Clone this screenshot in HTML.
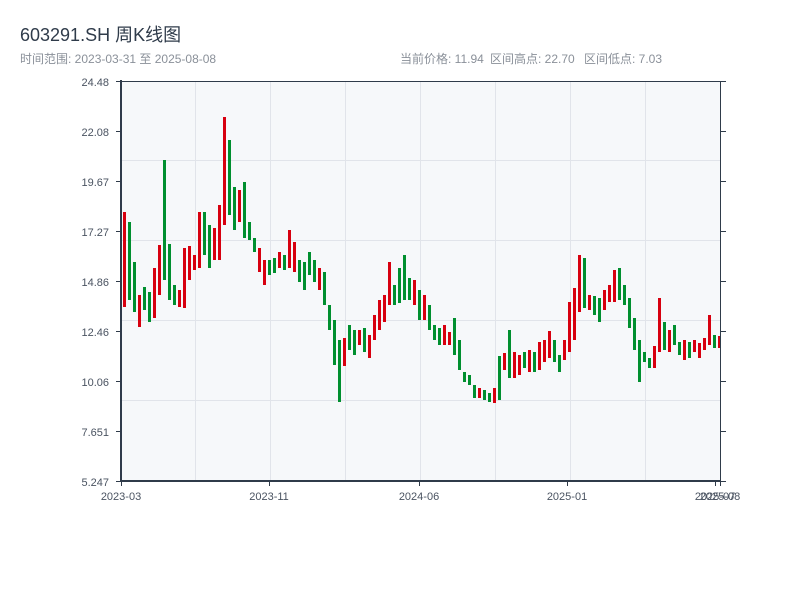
<!DOCTYPE html>
<html><head><meta charset="utf-8"><style>
body{margin:0;width:800px;height:600px;background:#fff;font-family:"Liberation Sans","Noto Sans CJK SC",sans-serif;overflow:hidden}
svg text{font-family:"Liberation Sans","Noto Sans CJK SC",sans-serif;white-space:pre}
</style></head><body>
<svg width="800" height="600" xmlns="http://www.w3.org/2000/svg">
<text x="20" y="41" font-size="18" fill="#2f3b4a">603291.SH 周K线图</text>
<text x="20" y="63" font-size="12" fill="#8a9099">时间范围: 2023-03-31 至 2025-08-08</text>
<text x="400" y="63" font-size="12" fill="#8a9099">当前价格: 11.94</text>
<text x="490" y="63" font-size="12" fill="#8a9099">区间高点: 22.70</text>
<text x="584" y="63" font-size="12" fill="#8a9099">区间低点: 7.03</text>
<rect x="121" y="81" width="599" height="400" fill="#f6f8fa"/>
<g stroke="#e1e4ea" stroke-width="1">
<line x1="195.5" y1="81" x2="195.5" y2="481"/><line x1="270.5" y1="81" x2="270.5" y2="481"/><line x1="345.5" y1="81" x2="345.5" y2="481"/><line x1="420.5" y1="81" x2="420.5" y2="481"/><line x1="495.5" y1="81" x2="495.5" y2="481"/><line x1="570.5" y1="81" x2="570.5" y2="481"/><line x1="645.5" y1="81" x2="645.5" y2="481"/>
<line x1="121" y1="160.5" x2="720" y2="160.5"/><line x1="121" y1="240.5" x2="720" y2="240.5"/><line x1="121" y1="320.5" x2="720" y2="320.5"/><line x1="121" y1="400.5" x2="720" y2="400.5"/>
</g>
<g fill="#d7000f">
<rect x="120" y="330" width="2" height="112"/>
<rect x="123" y="212" width="3" height="95"/><rect x="138" y="295" width="3" height="32"/><rect x="153" y="268" width="3" height="50"/><rect x="158" y="245" width="3" height="50"/><rect x="178" y="290" width="3" height="17"/><rect x="183" y="248" width="3" height="60"/><rect x="188" y="246" width="3" height="34"/><rect x="193" y="255" width="3" height="15"/><rect x="198" y="212" width="3" height="56"/><rect x="213" y="228" width="3" height="32"/><rect x="218" y="205" width="3" height="55"/><rect x="223" y="117" width="3" height="108"/><rect x="238" y="190" width="3" height="32"/><rect x="258" y="248" width="3" height="24"/><rect x="263" y="260" width="3" height="25"/><rect x="278" y="252" width="3" height="16"/><rect x="288" y="230" width="3" height="38"/><rect x="293" y="242" width="3" height="30"/><rect x="318" y="268" width="3" height="22"/><rect x="343" y="338" width="3" height="28"/><rect x="358" y="330" width="3" height="15"/><rect x="368" y="335" width="3" height="23"/><rect x="373" y="315" width="3" height="25"/><rect x="378" y="300" width="3" height="30"/><rect x="383" y="295" width="3" height="27"/><rect x="388" y="262" width="3" height="43"/><rect x="413" y="280" width="3" height="25"/><rect x="423" y="295" width="3" height="25"/><rect x="443" y="325" width="3" height="20"/><rect x="448" y="332" width="3" height="13"/><rect x="478" y="388" width="3" height="10"/><rect x="493" y="388" width="3" height="15"/><rect x="503" y="353" width="3" height="17"/><rect x="513" y="352" width="3" height="26"/><rect x="518" y="355" width="3" height="20"/><rect x="528" y="350" width="3" height="22"/><rect x="538" y="342" width="3" height="28"/><rect x="543" y="340" width="3" height="22"/><rect x="548" y="331" width="3" height="27"/><rect x="563" y="340" width="3" height="20"/><rect x="568" y="302" width="3" height="50"/><rect x="573" y="288" width="3" height="52"/><rect x="578" y="255" width="3" height="57"/><rect x="588" y="295" width="3" height="15"/><rect x="603" y="290" width="3" height="20"/><rect x="608" y="285" width="3" height="17"/><rect x="613" y="270" width="3" height="32"/><rect x="653" y="346" width="3" height="22"/><rect x="658" y="298" width="3" height="54"/><rect x="668" y="330" width="3" height="22"/><rect x="683" y="340" width="3" height="20"/><rect x="693" y="340" width="3" height="12"/><rect x="698" y="343" width="3" height="15"/><rect x="703" y="338" width="3" height="12"/><rect x="708" y="315" width="3" height="30"/><rect x="718" y="336" width="2" height="12"/>
</g>
<g fill="#008f2f">
<rect x="128" y="222" width="3" height="78"/><rect x="133" y="262" width="3" height="50"/><rect x="143" y="287" width="3" height="23"/><rect x="148" y="292" width="3" height="30"/><rect x="163" y="160" width="3" height="120"/><rect x="168" y="244" width="3" height="56"/><rect x="173" y="285" width="3" height="20"/><rect x="203" y="212" width="3" height="43"/><rect x="208" y="225" width="3" height="43"/><rect x="228" y="140" width="3" height="75"/><rect x="233" y="187" width="3" height="43"/><rect x="243" y="182" width="3" height="56"/><rect x="248" y="222" width="3" height="18"/><rect x="253" y="238" width="3" height="14"/><rect x="268" y="260" width="3" height="15"/><rect x="273" y="258" width="3" height="15"/><rect x="283" y="255" width="3" height="15"/><rect x="298" y="260" width="3" height="22"/><rect x="303" y="262" width="3" height="28"/><rect x="308" y="252" width="3" height="23"/><rect x="313" y="260" width="3" height="22"/><rect x="323" y="272" width="3" height="33"/><rect x="328" y="305" width="3" height="25"/><rect x="333" y="320" width="3" height="45"/><rect x="338" y="340" width="3" height="62"/><rect x="348" y="325" width="3" height="25"/><rect x="353" y="330" width="3" height="25"/><rect x="363" y="328" width="3" height="24"/><rect x="393" y="285" width="3" height="20"/><rect x="398" y="268" width="3" height="35"/><rect x="403" y="255" width="3" height="45"/><rect x="408" y="278" width="3" height="22"/><rect x="418" y="290" width="3" height="30"/><rect x="428" y="305" width="3" height="25"/><rect x="433" y="325" width="3" height="15"/><rect x="438" y="328" width="3" height="17"/><rect x="453" y="318" width="3" height="37"/><rect x="458" y="340" width="3" height="30"/><rect x="463" y="372" width="3" height="10"/><rect x="468" y="375" width="3" height="10"/><rect x="473" y="385" width="3" height="13"/><rect x="483" y="390" width="3" height="10"/><rect x="488" y="393" width="3" height="9"/><rect x="498" y="356" width="3" height="44"/><rect x="508" y="330" width="3" height="48"/><rect x="523" y="352" width="3" height="16"/><rect x="533" y="352" width="3" height="20"/><rect x="553" y="340" width="3" height="22"/><rect x="558" y="355" width="3" height="17"/><rect x="583" y="258" width="3" height="50"/><rect x="593" y="296" width="3" height="19"/><rect x="598" y="298" width="3" height="24"/><rect x="618" y="268" width="3" height="32"/><rect x="623" y="285" width="3" height="20"/><rect x="628" y="298" width="3" height="30"/><rect x="633" y="318" width="3" height="32"/><rect x="638" y="340" width="3" height="42"/><rect x="643" y="352" width="3" height="10"/><rect x="648" y="358" width="3" height="10"/><rect x="663" y="322" width="3" height="28"/><rect x="673" y="325" width="3" height="20"/><rect x="678" y="342" width="3" height="13"/><rect x="688" y="342" width="3" height="16"/><rect x="713" y="335" width="3" height="13"/>
</g>
<g stroke="#2f3b4a" stroke-width="2" fill="none">
<line x1="121" y1="80" x2="121" y2="482"/><line x1="120" y1="481" x2="721" y2="481"/>
</g>
<g stroke="#2f3b4a" stroke-width="1">
<line x1="720.5" y1="81" x2="720.5" y2="481"/><line x1="121" y1="81.5" x2="726" y2="81.5"/>
<line x1="116" y1="81.5" x2="121" y2="81.5"/><line x1="116" y1="131.5" x2="121" y2="131.5"/><line x1="116" y1="181.5" x2="121" y2="181.5"/><line x1="116" y1="231.5" x2="121" y2="231.5"/><line x1="116" y1="281.5" x2="121" y2="281.5"/><line x1="116" y1="331.5" x2="121" y2="331.5"/><line x1="116" y1="381.5" x2="121" y2="381.5"/><line x1="116" y1="431.5" x2="121" y2="431.5"/><line x1="116" y1="481.5" x2="121" y2="481.5"/>
<line x1="720" y1="131.5" x2="726" y2="131.5"/><line x1="720" y1="181.5" x2="726" y2="181.5"/><line x1="720" y1="231.5" x2="726" y2="231.5"/><line x1="720" y1="281.5" x2="726" y2="281.5"/><line x1="720" y1="331.5" x2="726" y2="331.5"/><line x1="720" y1="381.5" x2="726" y2="381.5"/><line x1="720" y1="431.5" x2="726" y2="431.5"/><line x1="720" y1="481.5" x2="726" y2="481.5"/>
<line x1="121.5" y1="481" x2="121.5" y2="486"/><line x1="269.5" y1="481" x2="269.5" y2="486"/><line x1="419.5" y1="481" x2="419.5" y2="486"/><line x1="567.5" y1="481" x2="567.5" y2="486"/><line x1="715.5" y1="481" x2="715.5" y2="486"/><line x1="720.5" y1="481" x2="720.5" y2="486"/>
</g>
<g font-size="11" fill="#4a5361" text-anchor="end">
<text x="109" y="86">24.48</text><text x="109" y="136">22.08</text><text x="109" y="186">19.67</text><text x="109" y="236">17.27</text><text x="109" y="286">14.86</text><text x="109" y="336">12.46</text><text x="109" y="386">10.06</text><text x="109" y="436">7.651</text><text x="109" y="486">5.247</text>
</g>
<g font-size="11" fill="#4a5361" text-anchor="middle">
<text x="121" y="500">2023-03</text><text x="269" y="500">2023-11</text><text x="419" y="500">2024-06</text><text x="567" y="500">2025-01</text><text x="715" y="500">2025-07</text><text x="720" y="500">2025-08</text>
</g>
</svg>
</body></html>
